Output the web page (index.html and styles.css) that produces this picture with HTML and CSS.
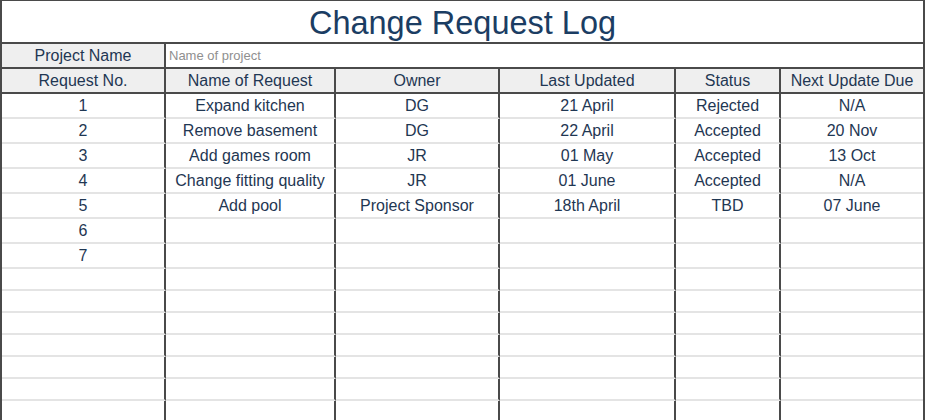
FILE: index.html
```html
<!DOCTYPE html>
<html>
<head>
<meta charset="utf-8">
<link rel="stylesheet" href="styles.css">
</head>
<body>
<div class="sheet">
  <div class="title">Change Request Log</div>
  <div class="project">
    <div class="label">Project Name</div>
    <div class="value">Name of project</div>
  </div>
  <div class="grid">
    <div class="cell head">Request No.</div>
    <div class="cell head">Name of Request</div>
    <div class="cell head">Owner</div>
    <div class="cell head">Last Updated</div>
    <div class="cell head">Status</div>
    <div class="cell head">Next Update Due</div>

    <div class="cell">1</div><div class="cell">Expand kitchen</div><div class="cell">DG</div><div class="cell">21 April</div><div class="cell">Rejected</div><div class="cell">N/A</div>
    <div class="cell">2</div><div class="cell">Remove basement</div><div class="cell">DG</div><div class="cell">22 April</div><div class="cell">Accepted</div><div class="cell">20 Nov</div>
    <div class="cell">3</div><div class="cell">Add games room</div><div class="cell">JR</div><div class="cell">01 May</div><div class="cell">Accepted</div><div class="cell">13 Oct</div>
    <div class="cell">4</div><div class="cell">Change fitting quality</div><div class="cell">JR</div><div class="cell">01 June</div><div class="cell">Accepted</div><div class="cell">N/A</div>
    <div class="cell">5</div><div class="cell">Add pool</div><div class="cell">Project Sponsor</div><div class="cell">18th April</div><div class="cell">TBD</div><div class="cell">07 June</div>
    <div class="cell">6</div><div class="cell"></div><div class="cell"></div><div class="cell"></div><div class="cell"></div><div class="cell"></div>
    <div class="cell">7</div><div class="cell"></div><div class="cell"></div><div class="cell"></div><div class="cell"></div><div class="cell"></div>

    <div class="cell"></div><div class="cell"></div><div class="cell"></div><div class="cell"></div><div class="cell"></div><div class="cell"></div>
    <div class="cell"></div><div class="cell"></div><div class="cell"></div><div class="cell"></div><div class="cell"></div><div class="cell"></div>
    <div class="cell"></div><div class="cell"></div><div class="cell"></div><div class="cell"></div><div class="cell"></div><div class="cell"></div>
    <div class="cell"></div><div class="cell"></div><div class="cell"></div><div class="cell"></div><div class="cell"></div><div class="cell"></div>
    <div class="cell"></div><div class="cell"></div><div class="cell"></div><div class="cell"></div><div class="cell"></div><div class="cell"></div>
    <div class="cell"></div><div class="cell"></div><div class="cell"></div><div class="cell"></div><div class="cell"></div><div class="cell"></div>
    <div class="cell"></div><div class="cell"></div><div class="cell"></div><div class="cell"></div><div class="cell"></div><div class="cell"></div>
  </div>
</div>
</body>
</html>
```
FILE: styles.css
```css
html, body {
  margin: 0;
  padding: 0;
  background: #ffffff;
}
body {
  font-family: "Liberation Sans", Arial, sans-serif;
  color: #1f3753;
  overflow: hidden;
  height: 420px;
}
.sheet {
  box-sizing: border-box;
  width: 925px;
  border: 2px solid #4a4a4a;
  border-top-width: 1px;
  border-bottom: none;
}
.title {
  box-sizing: border-box;
  height: 43px;
  border-bottom: 2px solid #4a4a4a;
  text-align: center;
  font-size: 32.5px;
  line-height: 44px;
  color: #1b3d63;
}
.project {
  display: grid;
  grid-template-columns: 164px 1fr;
  grid-template-rows: 23px;
  height: 25px;
  box-sizing: border-box;
  border-bottom: 2px solid #4a4a4a;
}
.project .label {
  box-sizing: border-box;
  background: #efefef;
  border-right: 2px solid #4a4a4a;
  text-align: center;
  font-size: 16px;
  line-height: 22px;
  padding-top: 1px;
}
.project .value {
  box-sizing: border-box;
  font-size: 13px;
  color: #8f8f8f;
  line-height: 22px;
  padding-left: 3px;
  padding-top: 1px;
}
.grid {
  display: grid;
  grid-template-columns: 164px 170px 164px 176px 105px 1fr;
  grid-template-rows: repeat(8, 25px) repeat(7, 22px);
}
.cell {
  box-sizing: border-box;
  border-right: 2px solid #4a4a4a;
  border-bottom: 2px solid #e4e4e4;
  text-align: center;
  font-size: 16px;
  line-height: 22px;
  padding-top: 1px;
  white-space: nowrap;
  overflow: hidden;
}
.cell:nth-child(6n) {
  border-right: none;
}
.cell.head {
  background: #efefef;
  border-bottom: 2px solid #4a4a4a;
}
```
